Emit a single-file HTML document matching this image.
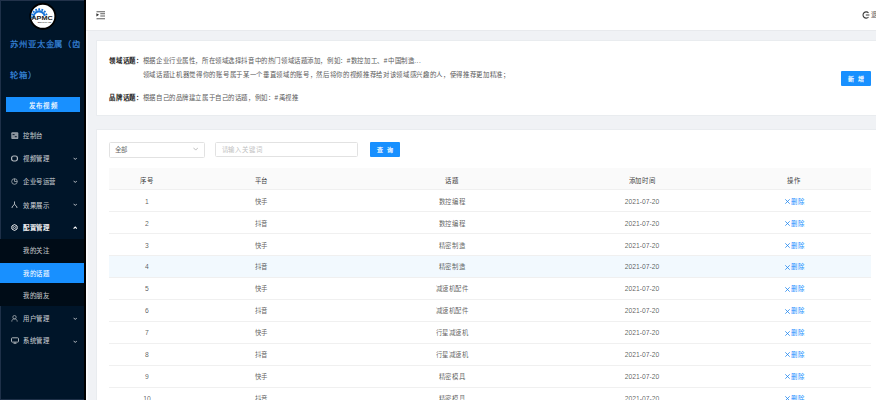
<!DOCTYPE html>
<html lang="zh-CN">
<head>
<meta charset="utf-8">
<style>
*{box-sizing:border-box;margin:0;padding:0}
html,body{width:876px;height:400px;overflow:hidden;background:#f0f2f5;font-family:"Liberation Sans",sans-serif}
.a{position:absolute}
#side{position:absolute;left:0;top:0;width:84.3px;height:400px;background:#001529}
#sideline{position:absolute;left:84.3px;top:0;width:1.5px;height:400px;background:#000}
#sidehalo{position:absolute;left:85.8px;top:0;width:2.5px;height:400px;background:linear-gradient(90deg,#fff,#f7f8fa)}
.title{position:absolute;left:10.3px;font-size:8.4px;letter-spacing:0.82px;color:#3b8de2;-webkit-text-stroke:0.25px rgba(59,141,226,0.6);white-space:nowrap;line-height:10px}
#pub{position:absolute;left:5.7px;top:96.5px;width:74.3px;height:15.5px;background:#1890ff;color:#fff;font-size:6.4px;letter-spacing:1.2px;padding-left:1.2px;text-align:center;line-height:17.4px;-webkit-text-stroke:0.12px #fff}
.mi{position:absolute;left:23px;font-size:6.4px;letter-spacing:0.58px;color:rgba(255,255,255,0.75);-webkit-text-stroke:0.1px rgba(255,255,255,0.4);line-height:8px;white-space:nowrap}
.mi.w{color:#fff;-webkit-text-stroke:0.22px #fff}
.ic{position:absolute;left:11px;width:7px;height:7px}
.chev{position:absolute;left:72.5px;width:4.5px;height:3.5px}
#sub{position:absolute;left:0;top:238.5px;width:84.3px;height:67px;background:#000c17}
#sel{position:absolute;left:0;top:263px;width:84.3px;height:19.5px;background:#1890ff}
#header{position:absolute;left:85.8px;top:0;width:790.2px;height:29.8px;background:#fff;box-shadow:0 0.8px 0 #e6e8ec}
.card{position:absolute;left:97px;width:779px;background:#fff;box-shadow:0 0 0 0.8px #e8eaee}
.t{position:absolute;font-size:6.4px;white-space:nowrap;line-height:8px;letter-spacing:0.58px}
.lbl{color:#262626;font-weight:bold}
.txt{color:#5a5a5a}
.btn{position:absolute;background:#1890ff;color:#fff;border-radius:1px;font-size:6px;text-align:center;letter-spacing:3.4px;-webkit-text-stroke:0.2px #fff}
.inp{position:absolute;background:#fff;border:0.5px solid #e2e2e2;border-radius:1.5px}
#tbl{position:absolute;left:109px;top:168.2px;width:762px}
.row{position:absolute;left:0;width:762px;height:21.95px;border-bottom:0.5px solid #f0f0f0}
.cell{position:absolute;top:0;height:21.5px;line-height:21.5px;text-align:center;font-size:6.4px;letter-spacing:0.58px;color:rgba(0,0,0,0.65);white-space:nowrap}
.hd .cell{color:rgba(0,0,0,0.8);top:1.4px}
.row:not(.hd) .cell{top:0.5px}
.c1{left:0;width:76px}
.c2{left:76px;width:153px}
.c3{left:229px;width:228px}
.c4{left:457px;width:152px}
.c5{left:609px;width:152px}
.del{color:#1890ff}
.num{font-size:6.75px;letter-spacing:0}
</style>
</head>
<body>
<div id="side"></div>
<div id="sideline"></div>
<div id="sidehalo"></div>
<div class="a" style="left:0;top:0;width:84.3px;height:1px;background:#22324a"></div>
<div class="a" style="left:0;top:0;width:1px;height:400px;background:#1e3048"></div>
<div class="a" style="left:0;top:399px;width:84.3px;height:1px;background:#1e3048"></div>
<svg class="a" style="left:28px;top:2px" width="30" height="30" viewBox="0 0 30 30">
<circle cx="14.8" cy="14.25" r="12.5" fill="#fff" stroke="#000" stroke-width="1.8"/>
<path d="M5.6 16.2A5.6 5.6 0 0 1 16.7 13.9" fill="none" stroke="#1874d8" stroke-width="2"/>
<path d="M3.9 16.4A7.4 7.4 0 0 1 18.6 13.2" fill="none" stroke="#1874d8" stroke-width="1.9" stroke-dasharray="1.8 1.3"/>
<text x="3.4" y="18.1" textLength="21.3" lengthAdjust="spacingAndGlyphs" font-family="Liberation Sans" font-weight="bold" font-size="4.9" fill="#1a1a1a">APMC</text>
<text x="9.8" y="21" textLength="13.4" lengthAdjust="spacingAndGlyphs" font-family="Liberation Sans" font-weight="bold" font-size="2.5" fill="#111">METALS CO.,LTD</text>
</svg>
<div class="title" style="top:39px">苏州亚太金属（齿</div>
<div class="title" style="top:69.5px">轮箱）</div>
<div id="pub">发布视频</div>

<div id="sub"></div>
<div id="sel"></div>

<!-- menu icons -->
<svg class="ic" style="top:131.6px;width:7.6px;height:7.4px" viewBox="0 0 7.6 7.4"><rect x="0.3" y="0.3" width="7" height="6.8" rx="1" fill="#9aa2ab"/><rect x="1.1" y="1.1" width="5.4" height="5.2" rx="0.4" fill="#8a939d"/><path d="M1.6 2.6H3.6M3.8 4.7H5.8" stroke="#0a1a2c" stroke-width="1"/></svg>
<div class="mi" style="top:132.10px">控制台</div>

<svg class="ic" style="top:155px" viewBox="0 0 7 7"><rect x="0.6" y="1" width="5.8" height="5" rx="2" fill="none" stroke="#b4bac0" stroke-width="1.2"/></svg>
<div class="mi" style="top:155.20px">视频管理</div>
<svg class="chev" style="top:157px" viewBox="0 0 4.5 3.5"><path d="M0.6 0.8L2.25 2.5L3.9 0.8" fill="none" stroke="#b4bac0" stroke-width="1"/></svg>

<svg class="ic" style="top:177.8px" viewBox="0 0 7 7"><circle cx="3.5" cy="3.5" r="2.8" fill="none" stroke="#a6adb4" stroke-width="0.8"/><path d="M3.5 0.7V3.5H6.3" fill="none" stroke="#a6adb4" stroke-width="0.8"/></svg>
<div class="mi" style="top:178.10px">企业号运营</div>
<svg class="chev" style="top:180px" viewBox="0 0 4.5 3.5"><path d="M0.6 0.8L2.25 2.5L3.9 0.8" fill="none" stroke="#b4bac0" stroke-width="1"/></svg>

<svg class="ic" style="top:200.8px" viewBox="0 0 7 7"><path d="M3.5 0.5V3.1L1 6.2M3.5 3.1L6 6.2M0.6 6.3H1.7M5.3 6.3H6.4" fill="none" stroke="#b4bac0" stroke-width="0.95"/></svg>
<div class="mi" style="top:201.80px">效果展示</div>
<svg class="chev" style="top:202.5px" viewBox="0 0 4.5 3.5"><path d="M0.6 0.8L2.25 2.5L3.9 0.8" fill="none" stroke="#b4bac0" stroke-width="1"/></svg>

<svg class="ic" style="top:224px" viewBox="0 0 7 7"><path d="M3.5 0.5L6.1 2V5L3.5 6.5L0.9 5V2Z" fill="none" stroke="#e8eaec" stroke-width="1"/><circle cx="3.5" cy="3.5" r="1.05" fill="none" stroke="#e8eaec" stroke-width="0.8"/></svg>
<div class="mi w" style="top:223.90px">配置管理</div>
<svg class="chev" style="top:226px" viewBox="0 0 4.5 3.5"><path d="M0.6 2.7L2.25 1L3.9 2.7" fill="none" stroke="#fff" stroke-width="1.1"/></svg>

<div class="mi" style="top:247.0px">我的关注</div>
<div class="mi" style="top:269.6px;color:#fff">我的话题</div>
<div class="mi" style="top:292px">我的朋友</div>

<svg class="ic" style="top:314.5px" viewBox="0 0 7 7"><circle cx="3.5" cy="2.2" r="1.7" fill="none" stroke="#a6adb4" stroke-width="0.8"/><path d="M0.8 6.6C0.8 4.6 2 3.9 3.5 3.9S6.2 4.6 6.2 6.6" fill="none" stroke="#a6adb4" stroke-width="0.8"/></svg>
<div class="mi" style="top:314.50px">用户管理</div>
<svg class="chev" style="top:316.5px" viewBox="0 0 4.5 3.5"><path d="M0.6 0.8L2.25 2.5L3.9 0.8" fill="none" stroke="#b4bac0" stroke-width="1"/></svg>

<svg class="ic" style="top:337.2px;width:8px" viewBox="0 0 8 7"><rect x="0.5" y="0.8" width="7" height="4.3" rx="0.8" fill="none" stroke="#b4bac0" stroke-width="0.95"/><path d="M2.5 6.4h3M4 5v1.3" stroke="#b4bac0" stroke-width="0.8"/></svg>
<div class="mi" style="top:337.40px">系统管理</div>
<svg class="chev" style="top:339.5px" viewBox="0 0 4.5 3.5"><path d="M0.6 0.8L2.25 2.5L3.9 0.8" fill="none" stroke="#b4bac0" stroke-width="1"/></svg>

<!-- header -->
<div id="header"></div>
<svg class="a" style="left:96px;top:10.5px" width="10" height="9" viewBox="0 0 10 9"><path d="M0.5 0.75H9M4.3 2.75H9M4.3 5H9M0.5 7.75H9" stroke="#4a4a4a" stroke-width="0.9"/><path d="M0.4 2.3L3.1 3.85L0.4 5.4Z" fill="#333"/></svg>
<svg class="a" style="left:862px;top:11px" width="8" height="8" viewBox="0 0 8 8"><path d="M6.5 2A3.1 3.1 0 1 0 6.5 6" fill="none" stroke="#3a3a3a" stroke-width="1.1"/><path d="M3.8 4H7.4" stroke="#3a3a3a" stroke-width="1"/></svg>
<div class="t" style="left:871px;top:10.5px;color:#555;font-size:6.4px">退出</div>

<!-- card 1 -->
<div class="card" style="top:41.3px;height:74px"></div>
<div class="t lbl" style="left:109.4px;top:56.5px">领域话题：</div>
<div class="t txt" style="left:142.8px;top:56.5px">根据企业行业属性，所在领域选择抖音中的热门领域话题添加，例如：#数控加工、#中国制造...</div>
<div class="t txt" style="left:142.8px;top:71px;letter-spacing:0.67px">领域话题让机器觉得你的账号属于某一个垂直领域的账号，然后将你的视频推荐给对该领域感兴趣的人，使得推荐更加精准；</div>
<div class="t lbl" style="left:109.4px;top:93.5px">品牌话题：</div>
<div class="t txt" style="left:142.8px;top:93.5px">根据自己的品牌建立属于自己的话题，例如：#禹视推</div>
<div class="btn" style="left:841px;top:71px;width:30px;height:15px;line-height:16.6px;padding-left:3.4px">新增</div>

<!-- card 2 -->
<div class="card" style="top:129.5px;height:271px"></div>
<div class="inp" style="left:108.8px;top:141.6px;width:95.8px;height:16px"></div>
<div class="t" style="left:114.7px;top:146.2px;color:rgba(0,0,0,0.65)">全部</div>
<svg class="a" style="left:192.8px;top:147.4px" width="5.4" height="4" viewBox="0 0 5.4 4"><path d="M0.4 0.7L2.7 3.1L5 0.7" fill="none" stroke="#b0b0b0" stroke-width="0.8"/></svg>
<div class="inp" style="left:215px;top:141.6px;width:143.4px;height:15.8px"></div>
<div class="t" style="left:221.6px;top:146px;color:#bfbfbf;letter-spacing:0.9px">请输入关键词</div>
<div class="btn" style="left:370px;top:142px;width:30.2px;height:15px;line-height:16.4px;padding-left:3.4px">查询</div>

<div id="tbl">
<div class="row hd" style="top:0;background:#fafafa"><div class="cell c1">序号</div><div class="cell c2">平台</div><div class="cell c3">话题</div><div class="cell c4">添加时间</div><div class="cell c5">操作</div></div>
<div class="row" style="top:21.95px"><div class="cell c1 num">1</div><div class="cell c2">快手</div><div class="cell c3">数控编程</div><div class="cell c4 num">2021-07-20</div><div class="cell c5 del"><svg width="5" height="5" viewBox="0 0 5 5" style="vertical-align:-0.2px;margin-right:1.4px;margin-left:0.8px"><path d="M0.3 0.3L4.7 4.7M4.7 0.3L0.3 4.7" stroke="#1e86f0" stroke-width="0.8"/></svg>删除</div></div>
<div class="row" style="top:43.9px"><div class="cell c1 num">2</div><div class="cell c2">抖音</div><div class="cell c3">数控编程</div><div class="cell c4 num">2021-07-20</div><div class="cell c5 del"><svg width="5" height="5" viewBox="0 0 5 5" style="vertical-align:-0.2px;margin-right:1.4px;margin-left:0.8px"><path d="M0.3 0.3L4.7 4.7M4.7 0.3L0.3 4.7" stroke="#1e86f0" stroke-width="0.8"/></svg>删除</div></div>
<div class="row" style="top:65.85px"><div class="cell c1 num">3</div><div class="cell c2">快手</div><div class="cell c3">精密制造</div><div class="cell c4 num">2021-07-20</div><div class="cell c5 del"><svg width="5" height="5" viewBox="0 0 5 5" style="vertical-align:-0.2px;margin-right:1.4px;margin-left:0.8px"><path d="M0.3 0.3L4.7 4.7M4.7 0.3L0.3 4.7" stroke="#1e86f0" stroke-width="0.8"/></svg>删除</div></div>
<div class="row" style="top:87.8px;background:#f2f9fe"><div class="cell c1 num">4</div><div class="cell c2">抖音</div><div class="cell c3">精密制造</div><div class="cell c4 num">2021-07-20</div><div class="cell c5 del"><svg width="5" height="5" viewBox="0 0 5 5" style="vertical-align:-0.2px;margin-right:1.4px;margin-left:0.8px"><path d="M0.3 0.3L4.7 4.7M4.7 0.3L0.3 4.7" stroke="#1e86f0" stroke-width="0.8"/></svg>删除</div></div>
<div class="row" style="top:109.75px"><div class="cell c1 num">5</div><div class="cell c2">快手</div><div class="cell c3">减速机配件</div><div class="cell c4 num">2021-07-20</div><div class="cell c5 del"><svg width="5" height="5" viewBox="0 0 5 5" style="vertical-align:-0.2px;margin-right:1.4px;margin-left:0.8px"><path d="M0.3 0.3L4.7 4.7M4.7 0.3L0.3 4.7" stroke="#1e86f0" stroke-width="0.8"/></svg>删除</div></div>
<div class="row" style="top:131.7px"><div class="cell c1 num">6</div><div class="cell c2">抖音</div><div class="cell c3">减速机配件</div><div class="cell c4 num">2021-07-20</div><div class="cell c5 del"><svg width="5" height="5" viewBox="0 0 5 5" style="vertical-align:-0.2px;margin-right:1.4px;margin-left:0.8px"><path d="M0.3 0.3L4.7 4.7M4.7 0.3L0.3 4.7" stroke="#1e86f0" stroke-width="0.8"/></svg>删除</div></div>
<div class="row" style="top:153.65px"><div class="cell c1 num">7</div><div class="cell c2">快手</div><div class="cell c3">行星减速机</div><div class="cell c4 num">2021-07-20</div><div class="cell c5 del"><svg width="5" height="5" viewBox="0 0 5 5" style="vertical-align:-0.2px;margin-right:1.4px;margin-left:0.8px"><path d="M0.3 0.3L4.7 4.7M4.7 0.3L0.3 4.7" stroke="#1e86f0" stroke-width="0.8"/></svg>删除</div></div>
<div class="row" style="top:175.6px"><div class="cell c1 num">8</div><div class="cell c2">抖音</div><div class="cell c3">行星减速机</div><div class="cell c4 num">2021-07-20</div><div class="cell c5 del"><svg width="5" height="5" viewBox="0 0 5 5" style="vertical-align:-0.2px;margin-right:1.4px;margin-left:0.8px"><path d="M0.3 0.3L4.7 4.7M4.7 0.3L0.3 4.7" stroke="#1e86f0" stroke-width="0.8"/></svg>删除</div></div>
<div class="row" style="top:197.55px"><div class="cell c1 num">9</div><div class="cell c2">快手</div><div class="cell c3">精密模具</div><div class="cell c4 num">2021-07-20</div><div class="cell c5 del"><svg width="5" height="5" viewBox="0 0 5 5" style="vertical-align:-0.2px;margin-right:1.4px;margin-left:0.8px"><path d="M0.3 0.3L4.7 4.7M4.7 0.3L0.3 4.7" stroke="#1e86f0" stroke-width="0.8"/></svg>删除</div></div>
<div class="row" style="top:219.5px"><div class="cell c1 num">10</div><div class="cell c2">抖音</div><div class="cell c3">精密模具</div><div class="cell c4 num">2021-07-20</div><div class="cell c5 del"><svg width="5" height="5" viewBox="0 0 5 5" style="vertical-align:-0.2px;margin-right:1.4px;margin-left:0.8px"><path d="M0.3 0.3L4.7 4.7M4.7 0.3L0.3 4.7" stroke="#1e86f0" stroke-width="0.8"/></svg>删除</div></div>
</div>
</body>
</html>
